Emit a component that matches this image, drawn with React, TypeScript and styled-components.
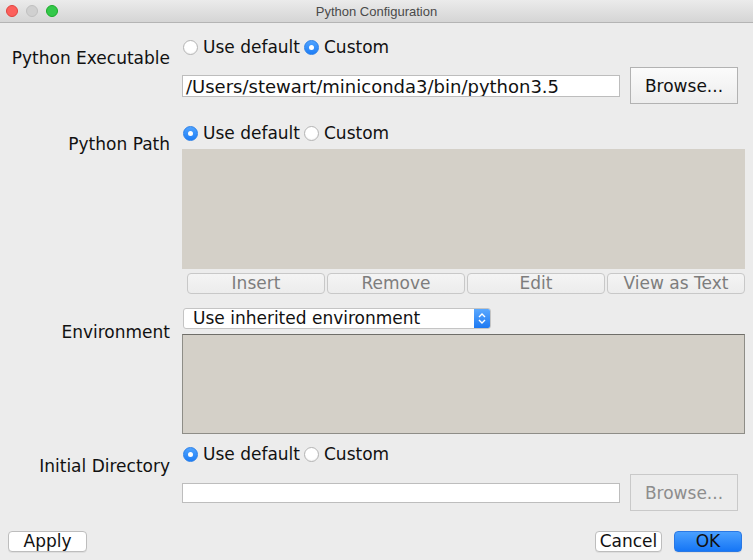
import React from "react";
import styled, { createGlobalStyle } from "styled-components";

const Global = createGlobalStyle`
  html, body { margin: 0; padding: 0; background: #ececec; }
  body { font-family: "DejaVu Sans", "Liberation Sans", sans-serif; }
  * { box-sizing: border-box; }
`;

const Window = styled.div`
  width: 753px;
  height: 560px;
  background: #ececec;
  display: flex;
  flex-direction: column;
  overflow: hidden;
  color: #111;
  font-size: 17px;
`;

const TitleBar = styled.div`
  height: 23px;
  flex: none;
  display: flex;
  align-items: center;
  position: relative;
  background: linear-gradient(#ebebeb, #d5d5d5);
  border-bottom: 1px solid #b4b4b4;
`;

const Lights = styled.div`
  display: flex;
  gap: 8px;
  padding-left: 6px;
`;

const Light = styled.span<{ $c: string; $b: string }>`
  width: 12px;
  height: 12px;
  border-radius: 50%;
  background: ${(p) => p.$c};
  border: 1px solid ${(p) => p.$b};
`;

const Title = styled.div`
  position: absolute;
  left: 0;
  right: 0;
  text-align: center;
  font-family: "Liberation Sans", sans-serif;
  font-size: 13px;
  color: #4a4a4a;
  pointer-events: none;
`;

const Body = styled.div`
  display: flex;
  flex-direction: column;
  padding-right: 8px;
`;

const Section = styled.div<{ $top: number }>`
  display: grid;
  grid-template-columns: 170px 1fr;
  column-gap: 12px;
  margin-top: ${(p) => p.$top}px;
`;

const Label = styled.div<{ $top: number }>`
  text-align: right;
  padding-top: ${(p) => p.$top}px;
  line-height: 20px;
  white-space: nowrap;
`;

const Content = styled.div`
  display: flex;
  flex-direction: column;
`;

const RadioRow = styled.div`
  display: flex;
  align-items: center;
  height: 20px;
  padding-left: 1px;
`;

const RadioItem = styled.label`
  display: inline-flex;
  align-items: center;
  line-height: 20px;
  margin-right: 4px;
  white-space: nowrap;
`;

const RadioCircle = styled.span<{ $on: boolean }>`
  width: 15px;
  height: 15px;
  border-radius: 50%;
  margin-right: 5px;
  display: inline-flex;
  align-items: center;
  justify-content: center;
  background: ${(p) => (p.$on ? "linear-gradient(#4fa3ff, #1e7ef6)" : "#fff")};
  border: 1px solid ${(p) => (p.$on ? "#2a7fe8" : "#b3b3b3")};
  box-shadow: ${(p) => (p.$on ? "none" : "inset 0 -1px 1px rgba(0,0,0,0.05)")};
  &::after {
    content: "";
    display: ${(p) => (p.$on ? "block" : "none")};
    width: 5px;
    height: 5px;
    border-radius: 50%;
    background: #fff;
  }
`;

const FieldRow = styled.div`
  display: flex;
  align-items: center;
  gap: 10px;
  margin-top: 10px;
  padding-right: 7px;
`;

const TextField = styled.div<{ $h: number }>`
  flex: 1;
  height: ${(p) => p.$h}px;
  background: #fff;
  border: 1px solid #bdbdbd;
  padding-left: 3px;
  font-size: 18px;
  line-height: 21px;
  overflow: hidden;
  white-space: nowrap;
`;

const BrowseButton = styled.button<{ $disabled?: boolean }>`
  width: 108px;
  height: 37px;
  font: inherit;
  font-size: 17px;
  color: ${(p) => (p.$disabled ? "#8d8d8d" : "#111")};
  background: ${(p) => (p.$disabled ? "#ececec" : "linear-gradient(#fbfbfb, #ededed)")};
  border: 1px solid ${(p) => (p.$disabled ? "#c9c9c9" : "#b2b2b2")};
  border-radius: 0;
  padding: 0;
`;

const ListArea = styled.div`
  height: 120px;
  margin-top: 6px;
  background: #d4d0c8;
`;

const ListButtons = styled.div`
  display: grid;
  grid-template-columns: repeat(4, 1fr);
  gap: 2px;
  margin-top: 4px;
  padding-left: 5px;
`;

const ListButton = styled.button`
  height: 21px;
  font: inherit;
  font-size: 17px;
  line-height: 19px;
  color: #7d7d7d;
  background: linear-gradient(#f4f4f4, #ececec);
  border: 1px solid #c8c8c8;
  border-radius: 4px;
  padding: 0;
`;

const Select = styled.div`
  margin-top: 14px;
  width: 308px;
  height: 21px;
  margin-left: 1px;
  display: flex;
  align-items: stretch;
  background: #fff;
  border: 1px solid #c4c4c4;
  border-radius: 3px;
  overflow: hidden;
`;

const SelectText = styled.div`
  flex: 1;
  padding-left: 9px;
  line-height: 19px;
  white-space: nowrap;
`;

const SelectArrow = styled.div`
  width: 16px;
  display: flex;
  align-items: center;
  justify-content: center;
  background: linear-gradient(#5aa8ff, #1d79f2);
`;

const EnvBox = styled.div`
  margin-top: 5px;
  height: 100px;
  background: #d4d0c8;
  border: 1px solid #8e8d87;
  border-top-color: #6f6e69;
`;

const Footer = styled.div`
  display: flex;
  align-items: center;
  margin-top: 20px;
  padding: 0 11px 0 8px;
`;

const Spacer = styled.div`
  flex: 1;
`;

const PushButton = styled.button<{ $w: number; $primary?: boolean }>`
  width: ${(p) => p.$w}px;
  height: 21px;
  font: inherit;
  font-size: 17px;
  line-height: 19px;
  padding: 0;
  color: #111;
  background: ${(p) => (p.$primary ? "linear-gradient(#4aa0ff, #1676f5)" : "#fff")};
  border: 1px solid ${(p) => (p.$primary ? "#2a78e4" : "#bdbdbd")};
  border-radius: 4px;
  box-shadow: 0 1px 0 rgba(0, 0, 0, 0.06);
  & + & {
    margin-left: 12px;
  }
`;

const Radio = ({ on, children }: { on: boolean; children: React.ReactNode }) => (
  <RadioItem>
    <RadioCircle $on={on} />
    {children}
  </RadioItem>
);

export default function App() {
  return (
    <>
      <Global />
      <Window>
        <TitleBar>
          <Lights>
            <Light $c="#fc605c" $b="#e0443e" />
            <Light $c="#d0d0d0" $b="#c0c0c0" />
            <Light $c="#34c84a" $b="#1aab29" />
          </Lights>
          <Title>Python Configuration</Title>
        </TitleBar>
        <Body>
          <Section $top={14}>
            <Label $top={11}>Python Executable</Label>
            <Content>
              <RadioRow>
                <Radio on={false}>Use default</Radio>
                <Radio on={true}>Custom</Radio>
              </RadioRow>
              <FieldRow>
                <TextField $h={22}>/Users/stewart/miniconda3/bin/python3.5</TextField>
                <BrowseButton>Browse...</BrowseButton>
              </FieldRow>
            </Content>
          </Section>
          <Section $top={19}>
            <Label $top={11}>Python Path</Label>
            <Content>
              <RadioRow>
                <Radio on={true}>Use default</Radio>
                <Radio on={false}>Custom</Radio>
              </RadioRow>
              <ListArea />
              <ListButtons>
                <ListButton>Insert</ListButton>
                <ListButton>Remove</ListButton>
                <ListButton>Edit</ListButton>
                <ListButton>View as Text</ListButton>
              </ListButtons>
            </Content>
          </Section>
          <Section $top={0}>
            <Label $top={28}>Environment</Label>
            <Content>
              <Select>
                <SelectText>Use inherited environment</SelectText>
                <SelectArrow>
                  <svg width="8" height="13" viewBox="0 0 8 13">
                    <path d="M1 5 L4 2 L7 5 M1 8 L4 11 L7 8" fill="none" stroke="#fff" strokeWidth="1.4" />
                  </svg>
                </SelectArrow>
              </Select>
              <EnvBox />
            </Content>
          </Section>
          <Section $top={10}>
            <Label $top={12}>Initial Directory</Label>
            <Content>
              <RadioRow>
                <Radio on={true}>Use default</Radio>
                <Radio on={false}>Custom</Radio>
              </RadioRow>
              <FieldRow>
                <TextField $h={20} />
                <BrowseButton $disabled>Browse...</BrowseButton>
              </FieldRow>
            </Content>
          </Section>
        </Body>
        <Footer>
          <PushButton $w={79}>Apply</PushButton>
          <Spacer />
          <PushButton $w={67}>Cancel</PushButton>
          <PushButton $w={68} $primary>OK</PushButton>
        </Footer>
      </Window>
    </>
  );
}
